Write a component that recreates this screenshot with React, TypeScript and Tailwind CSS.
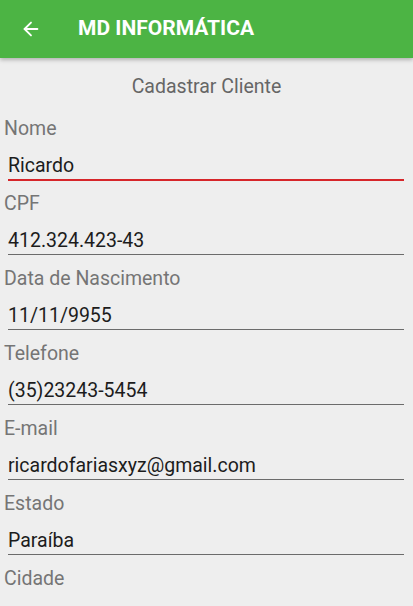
import { ArrowLeft } from "lucide-react";

interface FieldProps {
  label: string;
  value?: string;
  focused?: boolean;
}

const fields: FieldProps[] = [
  { label: "Nome", value: "Ricardo", focused: true },
  { label: "CPF", value: "412.324.423-43" },
  { label: "Data de Nascimento", value: "11/11/9955" },
  { label: "Telefone", value: "(35)23243-5454" },
  { label: "E-mail", value: "ricardofariasxyz@gmail.com" },
  { label: "Estado", value: "Paraíba" },
  { label: "Cidade", value: "" },
];

const Field = ({ label, value, focused }: FieldProps) => {
  return (
    <div className="flex flex-col">
      <div className="h-6 leading-6 pl-[4px] pt-px text-[19.5px] text-[#757575]">{label}</div>
      <div className="mt-[13px] h-6 leading-6 pl-[8px] pt-px text-[19.5px] text-[#1c1c1c]">{value}</div>
      {focused ? (
        <div className="mt-[2px] mb-[10px] ml-[8px] mr-[9px] h-[2px] bg-[#d6252a]" />
      ) : (
        <div className="mt-[2px] mb-[11px] ml-[8px] mr-[9px] h-px bg-[#6b6b6b]" />
      )}
    </div>
  );
};

export default function App() {
  return (
    <div className="w-[413px] h-[606px] overflow-hidden bg-[#eeeeee] font-['Roboto',sans-serif]">
      <div className="relative z-10 h-[58px] bg-[#4cb444] flex items-center shadow-[0_2px_4px_rgba(0,0,0,0.25)]">
        <ArrowLeft className="ml-[20px] text-white" size={22} strokeWidth={2} />
        <h1 className="ml-[36px] text-white text-[21px] font-bold">MD INFORMÁTICA</h1>
      </div>
      <div className="h-[58px] flex items-center justify-center text-[19.5px] text-[#666666]">
        Cadastrar Cliente
      </div>
      <div className="flex flex-col">
        {fields.map((f) => (
          <Field key={f.label} {...f} />
        ))}
      </div>
    </div>
  );
}
